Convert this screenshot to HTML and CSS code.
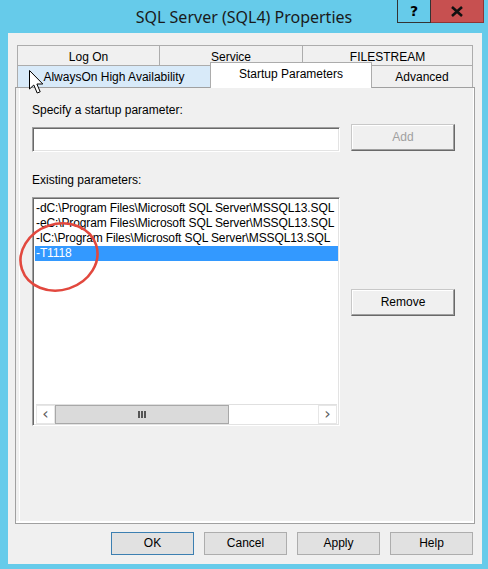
FILE: index.html
```html
<!DOCTYPE html>
<html lang="en">
<head>
    <meta charset="UTF-8">
    <title>SQL Server (SQL4) Properties</title>
    <link rel="stylesheet" href="styles.css">
</head>
<body>
    <div class="titlebar">
        <div></div>
        <div class="title">SQL Server (SQL4) Properties</div>
        <div class="caption-btns">
            <div class="cb help">?</div>
            <div class="cb close">
                <svg width="14" height="11" viewBox="0 0 14 11"><path d="M2 1 L12 10 M12 1 L2 10" stroke="#111" stroke-width="2.6"/></svg>
            </div>
        </div>
    </div>

    <div class="client">
        <div class="tabs">
            <div class="tabrow back">
                <div class="tab" style="width:143px">Log On</div>
                <div class="tab" style="width:144px">Service</div>
                <div class="tab" style="width:171px">FILESTREAM</div>
            </div>
            <div class="tabrow front">
                <div class="tab hover" style="width:194px">AlwaysOn High Availability</div>
                <div class="tab active" style="width:162px">Startup Parameters</div>
                <div class="tab" style="width:102px">Advanced</div>
            </div>
        </div>

        <div class="panel">
            <div class="label">Specify a startup parameter:</div>
            <div class="row">
                <div class="textbox"></div>
                <div class="btn3d disabled">Add</div>
            </div>
            <div class="label second">Existing parameters:</div>
            <div class="row">
                <div class="listbox">
                    <div class="items">
                        <div class="item">-dC:\Program Files\Microsoft SQL Server\MSSQL13.SQL</div>
                        <div class="item">-eC:\Program Files\Microsoft SQL Server\MSSQL13.SQL</div>
                        <div class="item">-lC:\Program Files\Microsoft SQL Server\MSSQL13.SQL</div>
                        <div class="item selected">-T1118</div>
                    </div>
                    <div class="hscroll">
                        <div class="arrow">&#8249;</div>
                        <div class="thumb"><span class="grip"></span></div>
                        <div class="track"></div>
                        <div class="arrow">&#8250;</div>
                    </div>
                </div>
                <div class="btn3d remove">Remove</div>
            </div>
        </div>

        <div class="dialog-buttons">
            <div class="dbtn default">OK</div>
            <div class="dbtn">Cancel</div>
            <div class="dbtn">Apply</div>
            <div class="dbtn">Help</div>
        </div>
    </div>

    <!-- annotation + mouse pointer drawn over the dialog -->
    <svg class="overlay" width="488" height="569" viewBox="0 0 488 569">
        <ellipse cx="59" cy="257" rx="39" ry="33" transform="rotate(-18 59 257)" fill="none" stroke="#e2483e" stroke-width="2.6"/>
        <path d="M29.5 70.5 L29.5 89 L33.8 85 L37.2 93 L40.2 91.8 L36.9 84 L42.8 84 Z" fill="#fff" stroke="#000" stroke-width="1" stroke-linejoin="round"/>
    </svg>
</body>
</html>
```

FILE: styles.css
```css
body {
    margin: 0;
    width: 488px;
    height: 569px;
    overflow: hidden;
    position: relative;
    background: #66cbea;
    font-family: "Liberation Sans", Arial, sans-serif;
    font-size: 12px;
    color: #000;
}
.titlebar {
    display: grid;
    grid-template-columns: 1fr auto 1fr;
    height: 33px;
}
.title {
    font-family: "Noto Sans", sans-serif;
    font-size: 16px;
    color: #1a1a1a;
    line-height: 22px;
    padding-top: 6px;
}
.caption-btns {
    justify-self: end;
    display: flex;
    margin-right: 4px;
    height: 23px;
}
.cb {
    box-sizing: border-box;
    height: 23px;
    display: flex;
    align-items: center;
    justify-content: center;
}
.help {
    width: 34px;
    border: 1px solid #333;
    border-top: none;
    font-weight: bold;
    font-size: 14px;
    font-family: "DejaVu Sans", sans-serif;
}
.close {
    width: 53px;
    background: #c75050;
    border: 1px solid #8e3535;
    border-top: none;
    border-left: none;
}
.client {
    box-sizing: border-box;
    margin-left: 8px;
    width: 474px;
    height: 531px;
    background: #f0f0f0;
    padding-top: 12px;
}
.tabs {
    margin-left: 9px;
    width: 456px;
}
.tabrow {
    display: flex;
    height: 21px;
}
.tabrow.front {
    align-items: flex-end;
}
.tab {
    box-sizing: border-box;
    height: 22px;
    margin-right: -1px;
    border: 1px solid #acacac;
    border-bottom: none;
    background: #f0f0f0;
    text-align: center;
    line-height: 22px;
}
.tab.hover {
    background: #d8eaf9;
}
.tab.active {
    height: 26px;
    margin-bottom: -1px;
    background: #fff;
    z-index: 1;
    line-height: 22px;
}
.panel {
    box-sizing: border-box;
    margin-left: 7px;
    width: 460px;
    height: 437px;
    border: 1px solid #a0a0a0;
    box-shadow: inset -1px -2px 0 #fff, inset 3px 0 0 #f0f0f0, inset 4px 0 0 #fff;
    padding: 15px 0 0 16px;
}
.label {
    height: 14px;
    line-height: 14px;
}
.label.second {
    margin-top: 21px;
}
.row {
    display: flex;
    align-items: flex-start;
    gap: 11px;
    margin-top: 7px;
}
.label.second + .row {
    margin-top: 10px;
}
.textbox, .listbox {
    box-sizing: border-box;
    width: 308px;
    background: #fff;
    border: 1px solid;
    border-color: #a0a0a0 #fff #fff #a0a0a0;
    box-shadow: inset 1px 1px 0 #696969, inset -1px -1px 0 #e3e3e3;
}
.textbox {
    height: 25px;
    margin-top: 3px;
}
.btn3d {
    box-sizing: border-box;
    width: 104px;
    height: 27px;
    line-height: 24px;
    text-align: center;
    background: #f0f0f0;
    border: 1px solid;
    border-color: #c8c8c8 #696969 #696969 #c8c8c8;
    box-shadow: inset -1px -1px 0 #a0a0a0, inset 1px 1px 0 #fff;
}
.btn3d.disabled {
    color: #a0a0a0;
}
.btn3d.remove {
    margin-top: 92px;
}
.listbox {
    height: 229px;
    padding: 2px 1px 1px 2px;
    display: flex;
    flex-direction: column;
}
.items {
    flex: 1;
    overflow: hidden;
    padding-top: 1px;
}
.item {
    height: 15px;
    line-height: 15px;
    padding-left: 1px;
    white-space: nowrap;
    letter-spacing: -0.12px;
}
.item.selected {
    background: #3399ff;
    color: #fff;
}
.hscroll {
    display: flex;
    height: 19px;
    margin-left: 1px;
    margin-right: 1px;
    border-top: 1px solid #e0e0e0;
}
.arrow {
    width: 19px;
    box-sizing: border-box;
    border: 1px solid #e6e6e6;
    text-align: center;
    line-height: 16px;
    font-size: 16px;
    color: #606060;
    font-family: "DejaVu Sans", sans-serif;
}
.thumb {
    width: 174px;
    box-sizing: border-box;
    background: #dadada;
    border: 1px solid #a8a8a8;
    display: flex;
    align-items: center;
    justify-content: center;
}
.grip {
    width: 8px;
    height: 7px;
    background: linear-gradient(to right, #555 0 2px, transparent 2px 3px, #555 3px 5px, transparent 5px 6px, #555 6px 8px);
}
.track {
    flex: 1;
    background: #fff;
}
.dialog-buttons {
    display: flex;
    justify-content: flex-end;
    gap: 10px;
    margin-top: 8px;
    padding-right: 9px;
}
.dbtn {
    box-sizing: border-box;
    width: 83px;
    height: 23px;
    line-height: 21px;
    text-align: center;
    background: #e1e1e1;
    border: 1px solid #adadad;
}
.dbtn.default {
    border-color: #3c7fb1;
}
.overlay {
    position: absolute;
    top: 0;
    left: 0;
    pointer-events: none;
}
```
